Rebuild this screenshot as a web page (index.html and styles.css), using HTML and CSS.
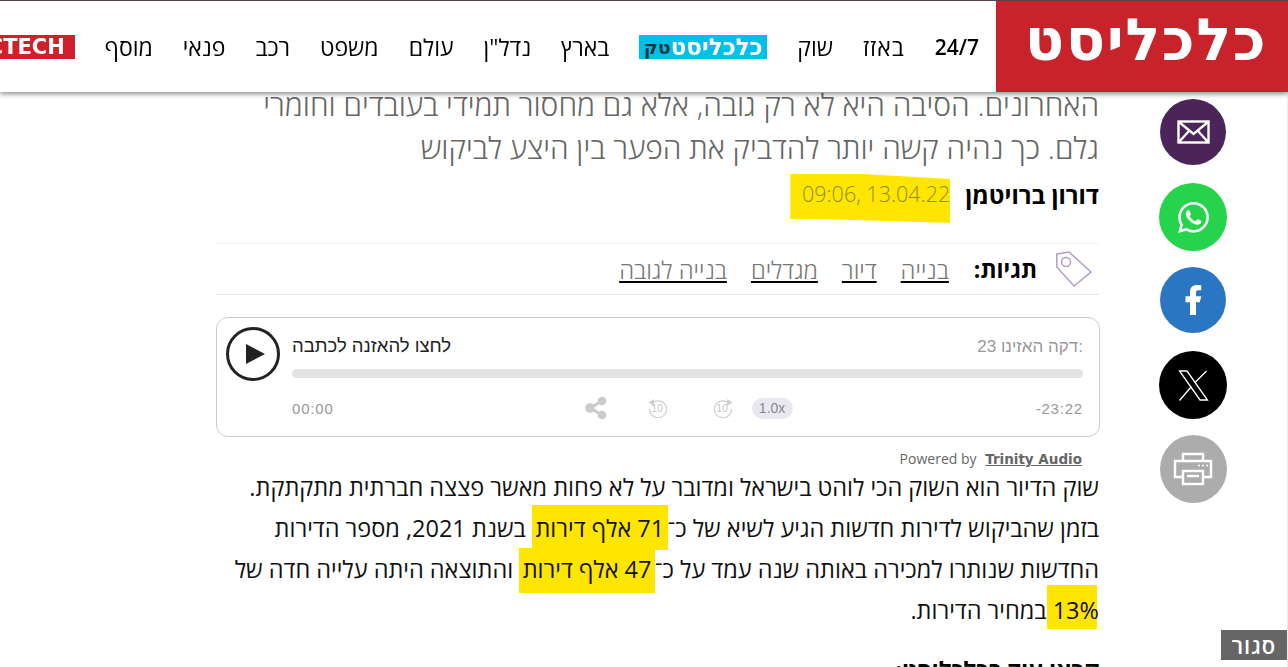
FILE: index.html
```html
<!DOCTYPE html>
<html lang="he" dir="rtl">
<head>
    <meta charset="UTF-8">
    <title>כלכליסט</title>
    <link rel="stylesheet" href="styles.css">
</head>
<body>

    <header class="site-header">
        <a class="logo">כלכליסט</a>
        <nav class="main-nav">
            <a class="nav-num">24/7</a>
            <a class="nav-wide">באזז</a>
            <a>שוק</a>
            <a class="tech-logo"><b>כלכליסט</b><i>טק</i></a>
            <a>בארץ</a>
            <a>נדל"ן</a>
            <a>עולם</a>
            <a>משפט</a>
            <a>רכב</a>
            <a>פנאי</a>
            <a>מוסף</a>
            <a class="ctech" dir="ltr">CTECH</a>
        </nav>
    </header>

    <div class="page">
        <aside class="share-rail">
            <a class="share-btn mail">
                <svg width="33" height="24" viewBox="0 0 33 24" fill="none" stroke="#fff" stroke-width="2.4"><rect x="1.500" y="1.500" width="30" height="21"/><path d="M2 2l14.500 12L31 2M2 22l10-11M31 22L21 11"/></svg>
            </a>
            <a class="share-btn whatsapp big">
                <svg width="31" height="31" viewBox="0 0 24 24" fill="#fff"><path d="M17.472 14.382c-.297-.149-1.758-.867-2.03-.967-.273-.099-.471-.148-.67.15-.197.297-.767.966-.94 1.164-.173.199-.347.223-.644.075-.297-.15-1.255-.463-2.39-1.475-.883-.788-1.48-1.761-1.653-2.059-.173-.297-.018-.458.13-.606.134-.133.298-.347.446-.52.149-.174.198-.298.298-.497.099-.198.05-.371-.025-.52-.075-.149-.669-1.612-.916-2.207-.242-.579-.487-.5-.669-.51-.173-.008-.371-.01-.57-.01-.198 0-.52.074-.792.372-.272.297-1.04 1.016-1.04 2.479 0 1.462 1.065 2.875 1.213 3.074.149.198 2.096 3.2 5.077 4.487.709.306 1.262.489 1.694.625.712.227 1.36.195 1.871.118.571-.085 1.758-.719 2.006-1.413.248-.694.248-1.289.173-1.413-.074-.124-.272-.198-.57-.347m-5.421 7.403h-.004a9.87 9.87 0 01-5.031-1.378l-.361-.214-3.741.982.998-3.648-.235-.374a9.86 9.86 0 01-1.51-5.26c.001-5.45 4.436-9.884 9.888-9.884 2.64 0 5.122 1.03 6.988 2.898a9.825 9.825 0 012.893 6.994c-.003 5.45-4.437 9.884-9.885 9.884m8.413-18.297A11.815 11.815 0 0012.05 0C5.495 0 .16 5.335.157 11.892c0 2.096.547 4.142 1.588 5.945L.057 24l6.305-1.654a11.882 11.882 0 005.683 1.448h.005c6.554 0 11.89-5.335 11.893-11.893a11.821 11.821 0 00-3.48-8.413z"/></svg>
            </a>
            <a class="share-btn facebook">
                <svg width="36" height="36" viewBox="0 0 24 24" fill="#fff"><path d="M14 13.500h2.500l1-4H14v-2c0-1.030 0-2 2-2h1.500V2.140c-.326-.043-1.557-.14-2.857-.14C11.928 2 10 3.657 10 6.700v2.800H7v4h3V22h4v-8.500z"/></svg>
            </a>
            <a class="share-btn twitter big">
                <svg width="31" height="31" viewBox="0 0 31 31" fill="none" stroke="#fff" stroke-width="1.300"><path d="M1.500 1H9l20.500 29H22zM1.500 30.500l12-14M17 12.500L28.500 1"/></svg>
            </a>
            <a class="share-btn print">
                <svg width="40" height="34" viewBox="0 0 40 34" fill="none" stroke="#fff" stroke-width="2.400"><path d="M10 9V2h20v7M10 25H2V9h36v16h-8"/><rect x="10" y="19" width="20" height="13"/><path d="M14 24h12"/><path d="M25 13.500h2M29 13.500h2M33 13.500h2" stroke-width="1.500"/></svg>
            </a>
        </aside>

        <main class="article">
            <p class="lead">האחרונים. הסיבה היא לא רק גובה, אלא גם מחסור תמידי בעובדים וחומרי<br>גלם. כך נהיה קשה יותר להדביק את הפער בין היצע לביקוש</p>

            <div class="byline">
                <span class="author">דורון ברויטמן</span>
                <span class="date" dir="ltr">09:06, 13.04.22</span>
            </div>

            <div class="tags">
                <svg class="tag-icon" width="36" height="36" viewBox="0 0 36 36" fill="none" stroke="#b49cc9" stroke-width="1.500"><path d="M.8 3L13 1l22 20-17 14L.8 16z"/><circle cx="10" cy="11" r="4.500"/></svg>
                <span class="tags-label">תגיות:</span>
                <a>בנייה</a>
                <a>דיור</a>
                <a>מגדלים</a>
                <a>בנייה לגובה</a>
            </div>

            <section class="player" dir="ltr">
                <button class="play-btn">
                    <svg width="24" height="24" viewBox="0 0 24 24" fill="#222"><path d="M3 2l19 10L3 22z"/></svg>
                </button>
                <div class="player-body">
                    <div class="player-top">
                        <span class="player-title" dir="rtl">לחצו להאזנה לכתבה</span>
                        <span class="player-length" dir="rtl">:דקה האזינו 23</span>
                    </div>
                    <div class="progress"></div>
                    <div class="player-bottom">
                        <span class="time">00:00</span>
                        <div class="controls">
                            <svg width="22" height="24" viewBox="0 0 22 24" fill="#cbcbcb" stroke="#cbcbcb"><path d="M17 5L5 12l12 7" fill="none" stroke-width="3"/><circle cx="17" cy="5" r="4.300" stroke="none"/><circle cx="5" cy="12" r="4.800" stroke="none"/><circle cx="17" cy="19" r="4.300" stroke="none"/></svg>
                            <span class="skip back">
                                <svg width="20" height="20" viewBox="0 0 20 20" fill="none" stroke="#cfcfcf" stroke-width="1.200"><path d="M5 4.500a8.500 8.500 0 1 1-3.400 6.500"/><path d="M.5 4.500L6 1V8z" fill="#cfcfcf" stroke="none"/></svg>
                                <em>10</em>
                            </span>
                            <span class="skip fwd">
                                <svg width="20" height="20" viewBox="0 0 20 20" fill="none" stroke="#cfcfcf" stroke-width="1.200"><path d="M15 4.500a8.500 8.500 0 1 0 3.400 6.500"/><path d="M19.500 4.500L14 1V8z" fill="#cfcfcf" stroke="none"/></svg>
                                <em>10</em>
                            </span>
                            <span class="speed">1.0x</span>
                        </div>
                        <span class="time">-23:22</span>
                    </div>
                </div>
            </section>

            <div class="powered" dir="ltr">Powered by <a>Trinity Audio</a></div>

            <p class="body-text">שוק הדיור הוא השוק הכי לוהט בישראל ומדובר על לא פחות מאשר פצצה חברתית מתקתקת. בזמן שהביקוש לדירות חדשות הגיע לשיא של כ־<mark class="mark-a">71 אלף דירות</mark> בשנת 2021, מספר הדירות החדשות שנותרו למכירה באותה שנה עמד על כ־<mark class="mark-b">47 אלף דירות</mark> והתוצאה היתה עלייה חדה של <mark class="mark-c">13% </mark>במחיר הדירות.</p>

            <h3 class="read-more">קראו עוד בכלכליסט:</h3>
        </main>
    </div>

    <a class="close-btn">סגור</a>

</body>
</html>
```

FILE: styles.css
```css
* {
    box-sizing: border-box;
}

html, body {
    height: 100%;
}

body {
    margin: 0;
    height: 667px;
    overflow: hidden;
    background: #fff;
    color: #000;
    font-family: "Open Sans", "Noto Sans", sans-serif;
    border-right: 1px solid #eee;
}

.site-header {
    position: fixed;
    top: 0;
    left: 0;
    right: 0;
    height: 92px;
    z-index: 10;
    display: flex;
    align-items: center;
    background: #fff;
    border-top: 1px solid #5b4047;
    box-shadow: 0 2px 5px rgba(0, 0, 0, 0.45);
    overflow: hidden;
}

.logo {
    flex: 0 0 292px;
    height: 100%;
    display: flex;
    align-items: center;
    justify-content: center;
    background: #c8232a;
    color: #fff;
    font-family: "DejaVu Sans", sans-serif;
    font-weight: 700;
    font-size: 58px;
    letter-spacing: 1.5px;
    padding: 0 0 14px 8px;
}

.main-nav {
    display: flex;
    align-items: center;
    gap: 30px;
    margin-right: 17px;
    font-size: 23px;
    white-space: nowrap;
    flex-shrink: 0;
}

.nav-num {
    font-size: 21px;
    font-weight: 600;
}

.nav-wide {
    letter-spacing: 1px;
}

.tech-logo {
    display: flex;
    align-items: center;
    justify-content: center;
    width: 128px;
    height: 24px;
    overflow: hidden;
    background: #00bfe8;
    color: #fff;
    font-family: "DejaVu Sans", sans-serif;
    font-size: 23px;
    line-height: 24px;
}

.tech-logo i {
    font-style: normal;
    font-weight: 700;
    font-size: 19px;
    color: #12343f;
}

.ctech {
    display: block;
    flex-shrink: 0;
    width: 93px;
    height: 24px;
    padding-right: 4px;
    line-height: 24px;
    text-align: center;
    background: #d11f2b;
    color: #fff;
    font-family: "DejaVu Sans", sans-serif;
    font-weight: 700;
    font-size: 21px;
}

.page {
    display: flex;
    padding-left: 216px;
}

.share-rail {
    flex: 0 0 188px;
    display: flex;
    flex-direction: column;
    align-items: center;
    gap: 16px;
    padding-top: 99px;
}

.share-btn {
    width: 66px;
    height: 66px;
    margin-bottom: 2px;
    border-radius: 50%;
    display: flex;
    align-items: center;
    justify-content: center;
}

.share-btn.big {
    width: 68px;
    height: 68px;
    margin-bottom: 0;
}

.mail { background: #4b2559; }
.whatsapp { background: #25d34c; }
.facebook { background: #2a76c3; }
.twitter { background: #000; }

.share-btn.print {
    width: 67px;
    height: 68px;
    background: #acacac;
}

.article {
    flex: 0 0 883px;
    padding-top: 83px;
}

.lead {
    margin: 0;
    font-size: 30px;
    font-weight: 300;
    line-height: 43px;
    color: #666;
}

.byline {
    display: flex;
    align-items: center;
    gap: 15px;
    height: 74px;
    padding-bottom: 24px;
}

.author {
    font-size: 24px;
    font-weight: 700;
}

.date {
    flex-shrink: 0;
    margin-top: 9px;
    background: #ffe600;
    color: #8f8d10;
    font-size: 21.500px;
    font-weight: 300;
    padding: 5px 0 15px;
    width: 160px;
    text-align: right;
    clip-path: polygon(0 0, 45% 0, 100% 10%, 100% 100%, 28% 93%, 0 92%);
}

.tags {
    display: flex;
    align-items: center;
    gap: 24px;
    height: 52px;
    border-top: 1px solid #eee;
    border-bottom: 1px solid #e5e5e5;
    font-size: 24px;
}

.tag-icon {
    margin-right: 7px;
    margin-left: -5px;
}

.tags-label {
    font-size: 23px;
    font-weight: 700;
    margin-left: 1px;
}

.tags a {
    color: #777;
    font-weight: 300;
    text-decoration: underline;
    text-decoration-color: #000;
}

.player {
    display: flex;
    height: 120px;
    margin: 22px -1px 0 0;
    padding: 9px 16px 0 9px;
    border: 1px solid #ccc;
    border-radius: 12px;
    font-family: "Liberation Sans", Arial, sans-serif;
}

.play-btn {
    flex: 0 0 54px;
    width: 54px;
    height: 54px;
    margin-right: 12px;
    padding: 0 0 0 4px;
    background: none;
    border: 3px solid #222;
    border-radius: 50%;
    display: flex;
    align-items: center;
    justify-content: center;
}

.player-body {
    flex: 1;
}

.player-top {
    display: flex;
    justify-content: space-between;
    align-items: center;
    height: 34px;
}

.player-title {
    font-size: 18.500px;
    color: #222;
    margin-top: 3px;
}

.player-length {
    font-size: 17px;
    color: #999;
    margin-top: 6px;
}

.progress {
    height: 9px;
    margin-top: 8px;
    background: #e2e2e2;
    border-radius: 5px;
}

.player-bottom {
    display: flex;
    align-items: center;
    justify-content: space-between;
    margin-top: 18px;
    height: 24px;
}

.time {
    font-size: 15px;
    color: #999;
    letter-spacing: 0.8px;
}

.controls {
    display: flex;
    align-items: center;
    margin-left: 8px;
}

.skip {
    position: relative;
    display: flex;
    width: 20px;
    height: 20px;
}

.skip em {
    position: absolute;
    top: 5px;
    left: 4px;
    font-style: normal;
    font-size: 10px;
    line-height: 12px;
    color: #c4c4c4;
}

.skip.back {
    margin-left: 41px;
}

.skip.fwd {
    margin-left: 45px;
}

.speed {
    margin-left: 19px;
    width: 41px;
    height: 21px;
    line-height: 21px;
    text-align: center;
    background: #e8e8f0;
    border-radius: 11px;
    font-size: 14px;
    color: #888;
}

.powered {
    height: 30px;
    padding: 13px 17px 0 0;
    text-align: right;
    font-size: 14px;
    line-height: 18px;
    color: #666;
}

.powered a {
    margin-left: 5px;
    font-family: "DejaVu Sans", sans-serif;
    font-size: 13.500px;
    font-weight: 700;
    text-decoration: underline;
}

.body-text {
    margin: 0;
    font-size: 23.500px;
    line-height: 41px;
    color: #111;
}

mark {
    background: #ffe600;
    color: inherit;
}

.mark-a {
    padding: 7px 3.500px 6px;
}

.mark-b {
    padding: 5px 3.500px 8px;
}

/* marker stops a little short of the % sign */
.mark-c {
    padding: 9px 0 3px;
    background: linear-gradient(#ffe600, #ffe600) no-repeat left / calc(100% - 2px) 100%;
}

.read-more {
    margin: 24px 0 0;
    font-size: 23.500px;
    line-height: 30px;
    font-weight: 700;
}

.close-btn {
    position: fixed;
    right: 1px;
    bottom: 7px;
    width: 66px;
    height: 30px;
    line-height: 30px;
    text-align: center;
    background: #666;
    color: #fff;
    font-size: 22px;
    font-weight: 600;
    letter-spacing: 1px;
}
```
